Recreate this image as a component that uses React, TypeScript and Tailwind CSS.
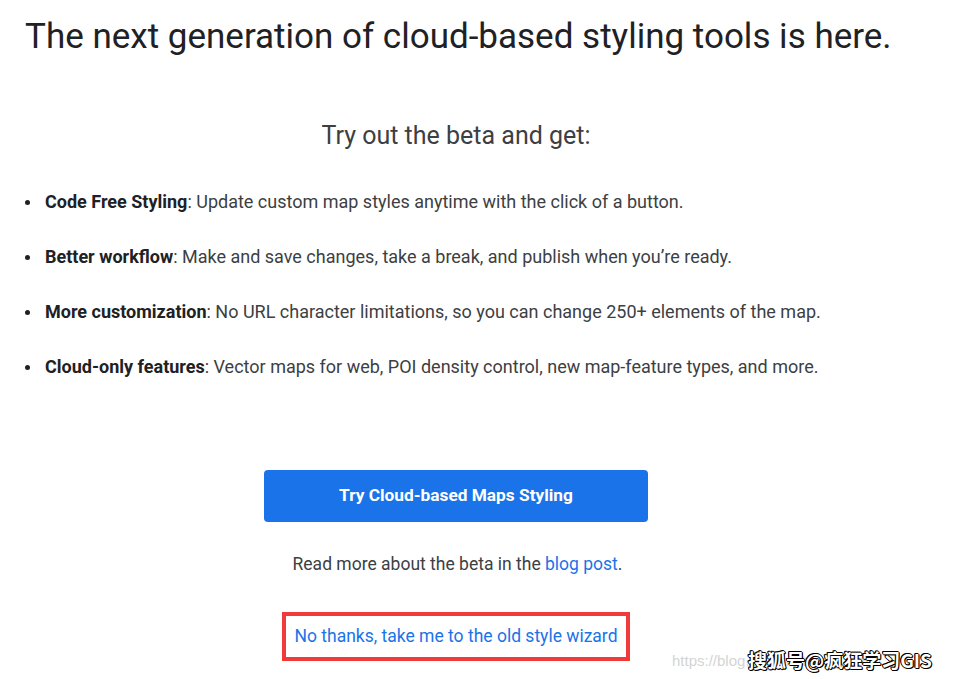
export default function App() {
  const items = [
    ['Code Free Styling', ': Update custom map styles anytime with the click of a button.'],
    ['Better workflow', ': Make and save changes, take a break, and publish when you\u2019re ready.'],
    ['More customization', ': No URL character limitations, so you can change 250+ elements of the map.'],
    ['Cloud-only features', ': Vector maps for web, POI density control, new map-feature types, and more.'],
  ];

  return (
    <div className="relative w-[954px] h-[679px] overflow-hidden bg-white font-['Roboto',sans-serif] text-[#3c4043]">
      <div className="w-[912px]">
        <h1 className="pl-[25px] pt-[15px] text-[35px] leading-[44px] text-[#202124] font-normal whitespace-nowrap">
          The next generation of cloud-based styling tools is here.
        </h1>

        <h2 className="mt-[62px] text-center text-[25px] leading-[30px] text-[#3c4043]">
          Try out the beta and get:
        </h2>

        <ul className="mt-[39px] pl-[25px] flex flex-col gap-[31px]">
          {items.map(([b, rest]) => (
            <li key={b} className="flex items-center text-[18px] leading-[24px] text-[#3c4043] whitespace-nowrap">
              <span className="w-[5px] h-[5px] rounded-full bg-[#202124] mr-[15px]" />
              <span>
                <b className="font-bold text-[#202124]">{b}</b>
                {rest}
              </span>
            </li>
          ))}
        </ul>

        <div className="mt-[91px] flex flex-col items-center">
          <button className="w-[384px] h-[52px] rounded-[4px] bg-[#1a73e8] text-white text-[17.3px] font-bold">
            Try Cloud-based Maps Styling
          </button>
          <p className="mt-[31px] text-[17.5px] leading-[23px] text-[#3c4043] ml-[3px]">
            Read more about the beta in the <a className="text-[#1a73e8]">blog post</a>.
          </p>
          <div className="mt-[36px] border-[4px] border-[#f33a3a] w-[348px] h-[49px] flex items-center justify-center">
            <a className="text-[17.5px] leading-[23px] text-[#1a73e8] whitespace-nowrap">No thanks, take me to the old style wizard</a>
          </div>
        </div>
      </div>

      {/* watermark */}
      <div className="absolute left-[672px] top-[650px] text-[15px] text-[#d4d4d4] font-['Liberation_Sans',sans-serif] whitespace-nowrap">
        https://blog.csdn.net/qq_4528fu
      </div>
      <div className="absolute left-[748px] top-[646px] text-[19px] font-bold text-white whitespace-nowrap font-['Noto_Sans_CJK_SC',sans-serif] [text-shadow:1px_0_0_#000,-1px_0_0_#000,0_1px_0_#000,0_-1px_0_#000,1px_1px_0_#000,-1px_-1px_0_#000]">
        搜狐号@疯狂学习GIS
      </div>
    </div>
  );
}
